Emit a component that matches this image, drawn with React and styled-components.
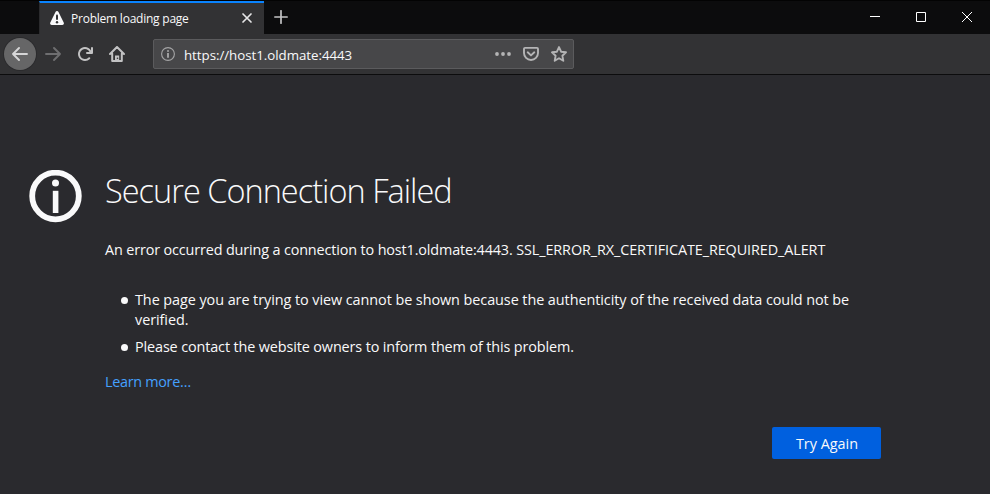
import React from 'react';
import styled, { createGlobalStyle } from 'styled-components';

const Global = createGlobalStyle`
  *, *::before, *::after { box-sizing: border-box; }
  html, body { margin: 0; padding: 0; background: #2a2a2e; }
  body { font-family: "Open Sans", "Noto Sans", sans-serif; color: #f9f9fa; overflow: hidden; }
  svg { display: block; flex: none; }
`;

const Window = styled.div`
  width: 990px;
  height: 494px;
  display: flex;
  flex-direction: column;
  background: #2a2a2e;
`;

const TitleBar = styled.header`
  display: flex;
  flex: none;
  height: 34px;
  padding-left: 39px;
  background: #0c0c0d;
  border-top: 1px solid #030303;
`;

const Tab = styled.div`
  display: flex;
  align-items: center;
  width: 225px;
  height: 33px;
  padding: 0 11px 1px 10px;
  border-top: 2px solid #0a84ff;
  border-left: 1px solid #2b2b2d;
  background: #323234;
`;

const TabTitle = styled.span`
  flex: 1;
  margin-left: 7px;
  padding-top: 2px;
  font-size: 12px;
  line-height: 16px;
  letter-spacing: -0.23px;
  white-space: nowrap;
`;

const NewTab = styled.button`
  display: flex;
  align-items: center;
  justify-content: center;
  width: 34px;
  height: 32px;
  padding: 0;
  border: 0;
  background: none;
`;

const WindowControls = styled.div`
  display: flex;
  margin-left: auto;
`;

const WindowButton = styled.button`
  display: flex;
  align-items: center;
  justify-content: center;
  width: 46px;
  height: 32px;
  padding: 0;
  border: 0;
  background: none;
`;

const Toolbar = styled.nav`
  display: flex;
  align-items: center;
  flex: none;
  height: 41px;
  padding-left: 4px;
  background: #323234;
  border-bottom: 1px solid #0c0c0d;
`;

const ToolButton = styled.button`
  display: flex;
  align-items: center;
  justify-content: center;
  width: 32px;
  height: 32px;
  padding: 0;
  border: 0;
  border-radius: 50%;
  background: none;
`;

const BackButton = styled(ToolButton)`
  background: #666667;
  box-shadow: 0 0 0 1px #2b2b2d;
  margin-right: 1px;
`;

const UrlBar = styled.div`
  display: flex;
  align-items: center;
  width: 421px;
  height: 30px;
  margin-left: 20px;
  padding: 0 6px 0 7px;
  border: 1px solid #5b5b5d;
  border-radius: 2px;
  background: #474749;
`;

const Url = styled.span`
  flex: 1;
  margin-left: 9px;
  padding-top: 2px;
  font-size: 13.3px;
  line-height: 20px;
  letter-spacing: -0.03px;
  white-space: nowrap;
`;

const UrlActions = styled.div`
  display: flex;
  align-items: center;
  gap: 12px;
`;

const Page = styled.main`
  display: flex;
  align-items: flex-start;
  padding: 95px 0 0 29px;
`;

const Message = styled.section`
  display: flex;
  flex-direction: column;
  width: 776px;
  margin-left: 23px;
  font-size: 14.4px;
  line-height: 20px;
`;

const Heading = styled.h1`
  margin: -1px 0 0;
  font-size: 32.5px;
  font-weight: 300;
  line-height: 44px;
  letter-spacing: -0.99px;
  white-space: nowrap;
`;

const Summary = styled.p`
  margin: 27px 0 0;
  white-space: nowrap;
  letter-spacing: -0.14px;
`;

const ErrorCode = styled.span`
  letter-spacing: -0.09px;
`;

const Reasons = styled.ul`
  margin: 30px 0 0;
  padding: 0;
  list-style: none;
`;

const Reason = styled.li`
  display: flex;
  margin-bottom: 7px;
  letter-spacing: ${(p) => p.$tracking};
  white-space: nowrap;

  &::before {
    content: "";
    flex: none;
    width: 7px;
    height: 7px;
    margin: 7px 7px 0 16px;
    border-radius: 50%;
    background: #f9f9fa;
  }
`;

const LearnMore = styled.a`
  align-self: flex-start;
  margin-top: 8px;
  color: #45a1ff;
  letter-spacing: -0.3px;
  text-decoration: none;
`;

const RetryButton = styled.button`
  align-self: flex-end;
  width: 109px;
  height: 32px;
  margin-top: 35px;
  padding: 2px 0 0 1px;
  border: 0;
  border-radius: 2px;
  background: #0060df;
  color: #f9f9fa;
  font: 14.4px/20px "Open Sans", "Noto Sans", sans-serif;
`;

const stroke = { fill: 'none', strokeLinecap: 'round', strokeLinejoin: 'round' };

const WarningIcon = () => (
  <svg width="14" height="14" viewBox="0 0 14 14">
    <path d="M7 0a1.7 1.7 0 0 1 1.5.9l5.2 10.6A1.7 1.7 0 0 1 12.2 14H1.8A1.7 1.7 0 0 1 .3 11.5L5.5.9A1.7 1.7 0 0 1 7 0z" fill="#f9f9fa" />
    <path d="M7 4.500v3.600" stroke="#323234" strokeWidth="2" strokeLinecap="round" />
    <circle cx="7" cy="11.200" r="1.200" fill="#323234" />
  </svg>
);

const TabCloseIcon = () => (
  <svg width="12" height="12" viewBox="0 0 12 12" {...stroke} stroke="#e6e6e7" strokeWidth="1.700">
    <path d="M2 2l8 8M10 2l-8 8" />
  </svg>
);

const PlusIcon = () => (
  <svg width="14" height="14" viewBox="0 0 14 14" {...stroke} stroke="#c4c4c5" strokeWidth="1.700">
    <path d="M7 .8v12.400M.8 7h12.400" />
  </svg>
);

const ArrowIcon = ({ color, flipped }) => (
  <svg width="16" height="16" viewBox="0 0 16 16" {...stroke} stroke={color} strokeWidth="1.900">
    <path d={flipped ? 'M1 8h14M9 2l6 6-6 6' : 'M15 8H1M7 2L1 8l6 6'} />
  </svg>
);

const ReloadIcon = () => (
  <svg width="16" height="16" viewBox="0 0 16 16" fill="#c2c2c3">
    <path d="M15 1a1 1 0 0 0-1 1v2.418A6.995 6.995 0 1 0 8 15a6.954 6.954 0 0 0 4.950-2.050 1 1 0 0 0-1.414-1.414A5.019 5.019 0 1 1 12.549 6H10a1 1 0 0 0 0 2h5a1 1 0 0 0 1-1V2a1 1 0 0 0-1-1z" />
  </svg>
);

const HomeIcon = () => (
  <svg width="16" height="16" viewBox="0 0 16 16" {...stroke} stroke="#c2c2c3" strokeWidth="2">
    <path d="M1 8l7-7 7 7M3.200 7.500V15h9.600V7.500" />
    <path d="M6 15V9.500h4.200V15z" fill="#c2c2c3" stroke="none" />
    <circle cx="8.500" cy="12.300" r=".8" fill="#323234" stroke="none" />
  </svg>
);

const SiteInfoIcon = () => (
  <svg width="14" height="14" viewBox="0 0 14 14">
    <circle cx="7" cy="7" r="6.400" fill="none" stroke="#a5a5a6" strokeWidth="1.100" />
    <circle cx="7" cy="3.900" r="1" fill="#a5a5a6" />
    <path d="M7 6v4.700" stroke="#a5a5a6" strokeWidth="1.900" />
  </svg>
);

const DotsIcon = () => (
  <svg width="16" height="16" viewBox="0 0 16 16" fill="#b4b4b5">
    <circle cx="2" cy="8" r="1.900" />
    <circle cx="8" cy="8" r="1.900" />
    <circle cx="14" cy="8" r="1.900" />
  </svg>
);

const PocketIcon = () => (
  <svg width="16" height="16" viewBox="0 0 16 16" {...stroke} stroke="#b4b4b5" strokeWidth="1.900">
    <path d="M2 1.900h12a1 1 0 0 1 1 1V7A7 7 0 0 1 1 7V2.900a1 1 0 0 1 1-1z" />
    <path d="M4.700 6.300L8 9.400l3.300-3.100" />
  </svg>
);

const StarIcon = () => (
  <svg width="16" height="16" viewBox="0 0 16 16" {...stroke} stroke="#b4b4b5" strokeWidth="1.900">
    <path d="M8 1.100l2.100 4.600 4.900.600-3.600 3.400.9 5.100L8 12.300l-4.300 2.500.9-5.100L1 6.300l4.900-.6z" />
  </svg>
);

const PageInfoIcon = () => (
  <svg width="53" height="53" viewBox="0 0 53 53">
    <circle cx="26.500" cy="26" r="23.300" fill="none" stroke="#f9f9fa" strokeWidth="5.800" />
    <circle cx="26.500" cy="13" r="3.500" fill="#f9f9fa" />
    <path d="M23.800 20.800h5.600V43h-5.600z" fill="#f9f9fa" />
  </svg>
);

export default function App() {
  return (
    <>
      <Global />
      <Window>
        <TitleBar>
          <Tab>
            <WarningIcon />
            <TabTitle>Problem loading page</TabTitle>
            <TabCloseIcon />
          </Tab>
          <NewTab aria-label="New tab"><PlusIcon /></NewTab>
          <WindowControls>
            <WindowButton aria-label="Minimize">
              <svg width="10" height="10" shapeRendering="crispEdges"><path d="M0 4h10v1H0z" fill="#fff" /></svg>
            </WindowButton>
            <WindowButton aria-label="Maximize">
              <svg width="10" height="10"><path d="M.5.5h9v9h-9z" fill="none" stroke="#fff" /></svg>
            </WindowButton>
            <WindowButton aria-label="Close">
              <svg width="10" height="10"><path d="M0 0l10 10M10 0L0 10" stroke="#fff" /></svg>
            </WindowButton>
          </WindowControls>
        </TitleBar>
        <Toolbar>
          <BackButton aria-label="Back"><ArrowIcon color="#d6d6d7" /></BackButton>
          <ToolButton aria-label="Forward"><ArrowIcon color="#6e6e70" flipped /></ToolButton>
          <ToolButton aria-label="Reload"><ReloadIcon /></ToolButton>
          <ToolButton aria-label="Home"><HomeIcon /></ToolButton>
          <UrlBar>
            <SiteInfoIcon />
            <Url>https://host1.oldmate:4443</Url>
            <UrlActions>
              <DotsIcon />
              <PocketIcon />
              <StarIcon />
            </UrlActions>
          </UrlBar>
        </Toolbar>
        <Page>
          <PageInfoIcon />
          <Message>
            <Heading>Secure Connection Failed</Heading>
            <Summary>
              An error occurred during a connection to host1.oldmate:4443.{' '}
              <ErrorCode>SSL_ERROR_RX_CERTIFICATE_REQUIRED_ALERT</ErrorCode>
            </Summary>
            <Reasons>
              <Reason $tracking="-0.06px">
                <span>
                  The page you are trying to view cannot be shown because the authenticity of the received data could not be
                  <br />
                  verified.
                </span>
              </Reason>
              <Reason $tracking="-0.12px">Please contact the website owners to inform them of this problem.</Reason>
            </Reasons>
            <LearnMore>Learn more…</LearnMore>
            <RetryButton>Try Again</RetryButton>
          </Message>
        </Page>
      </Window>
    </>
  );
}
